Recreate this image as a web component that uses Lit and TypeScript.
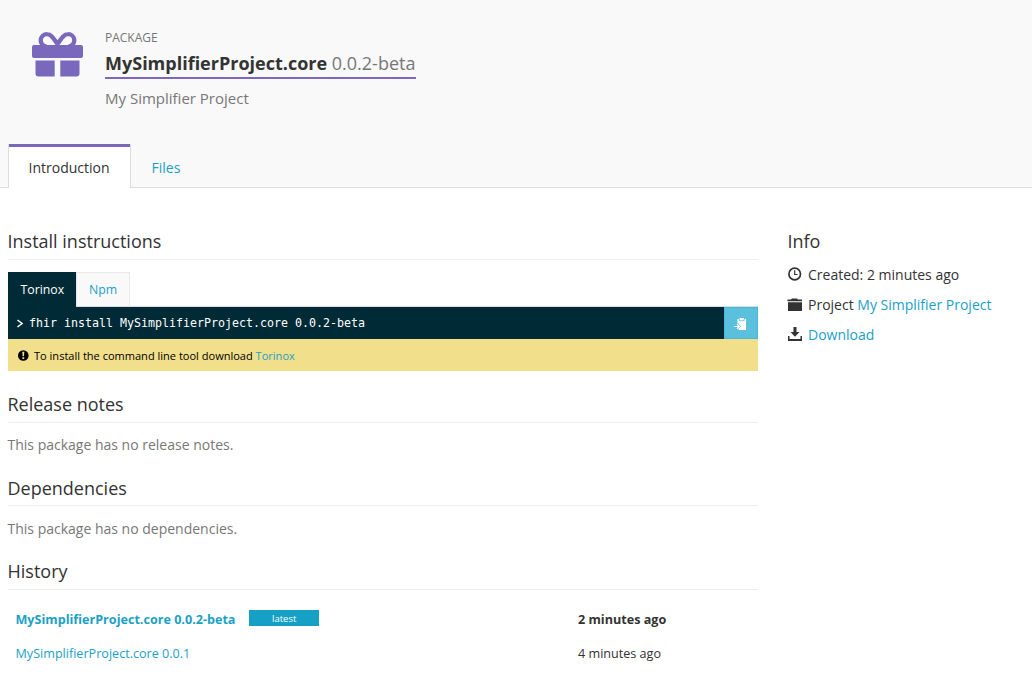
import { LitElement, html, css, svg } from "lit";
import { customElement } from "lit/decorators.js";

const gift = svg`<path d="M14.500 14.500A6.100 6.100 0 0 1 15.200 2.200C19.800 2.200 22 7.500 25.500 12C29 7.500 31.200 2.200 35.800 2.200A6.100 6.100 0 0 1 36.500 14.500" fill="none" stroke="#7a68bd" stroke-width="4.300"/><rect x="0" y="13" width="51" height="13" rx="2"/><path d="M3.500 28.500H22.700V44.500H6.500Q3.500 44.500 3.500 41.500ZM28.300 28.500H47.500V41.500Q47.500 44.500 44.500 44.500H28.300Z"/>`;

@customElement("app-root")
export class AppRoot extends LitElement {
  static styles = css`
    :host { display: block; width: 1032px; height: 688px; overflow: hidden; background: #fff; color: #333; font: 14px/20px "Open Sans", "Noto Sans", sans-serif; }
    * { box-sizing: border-box; }
    a { color: #1ba1c7; text-decoration: none; }
    svg { display: block; fill: currentColor; flex: none; }
    .header { height: 188px; background: #f9f9f9; border-bottom: 1px solid #ddd; display: flex; flex-direction: column; justify-content: space-between; }
    .title { display: flex; padding: 28px 0 0 32px; }
    .gift { color: #7a68bd; margin: 4px 22px 0 0; overflow: visible; }
    .kind { font-size: 12px; line-height: 20px; color: #777; }
    .name { width: 311px; height: 31px; border-bottom: 2px solid #7a68bd; font-size: 18px; line-height: 31px; color: #777; white-space: nowrap; }
    .name b { color: #333; }
    .desc { font-size: 15px; line-height: 20px; margin-top: 9px; color: #777; }
    .tabs { display: flex; height: 44px; margin: 0 0 -1px 8px; }
    .tab { height: 44px; padding: 14px 20px 0 20.500px; }
    .tab.on { width: 123px; padding: 14px 0 0 19.500px; border: 1px solid #ddd; border-top: 0; border-bottom: 0; background: #fff; box-shadow: inset 0 3px #7a68bd; }
    .body { display: flex; gap: 30px; padding: 0 8px; }
    .main { width: 750px; }
    h2 { margin: 0; font-size: 18px; font-weight: 400; line-height: 24px; text-indent: -0.500px; }
    .main h2 { height: 31px; border-bottom: 1px solid #eee; }
    .first { margin-top: 41px; }
    .subtabs { display: flex; height: 35px; margin-top: 12px; font-size: 12.300px; border-bottom: 1px solid #ddd; }
    .sub { height: 34px; border: 1px solid #e8e8e8; border-bottom: 0; width: 54px; background: #f9f9f9; padding-left: 12px; line-height: 33px; }
    .sub.on { height: 35px; width: 68px; border: 0; background: #002b36; color: #fff; line-height: 35px; padding-left: 12.500px; }
    .code { height: 32px; display: flex; align-items: center; background: #002b36; color: #fff; font: 11.630px/32px "DejaVu Sans Mono", monospace; white-space: pre; }
    .prompt { margin: 0 6px 0 9px; }
    .copy { margin-left: auto; width: 34px; height: 32px; padding: 1px 2px 0 0; background: #5bc0de; border: 1px solid #46b8da; display: grid; place-items: center; }
    .note { height: 32px; display: flex; align-items: center; gap: 5px; padding: 1px 0 0 10px; background: #f1df8b; color: #000; font-size: 11.040px; }
    .rel { margin-top: 21px; }
    .dep { margin-top: 20px; }
    .main .dep { height: 30px; }
    .dep + p { height: 34px; padding-top: 13px; }
    .hist { margin-top: 19px; }
    p { margin: 0; padding-top: 12px; height: 33px; color: #777; text-indent: -0.500px; }
    .row { display: flex; align-items: center; height: 34px; padding-left: 8px; font-size: 12.600px; }
    .row a { text-indent: -0.500px; }
    .rows { padding-top: 13px; }
    .pkg { width: 562px; display: flex; align-items: center; }
    .new { font-weight: 700; }
    .badge { width: 70px; height: 16px; margin: -5px 0 0 13.700px; background: #17a0c6; color: #fff; font-size: 9.500px; font-weight: 400; line-height: 17px; text-align: center; }
    .info { width: 230px; padding-top: 41px; }
    .info h2 { margin-bottom: 7px; }
    .item { display: flex; align-items: center; height: 30px; gap: 6px; white-space: pre; }
    .item svg { margin-top: -2px; }
  `;

  render() {
    return html`
      <div class="header">
        <div class="title">
          <svg class="gift" width="51" height="45" viewBox="0 0 51 45">${gift}</svg>
          <div>
            <div class="kind">PACKAGE</div>
            <div class="name"><b>MySimplifierProject.core</b> 0.0.2-beta</div>
            <div class="desc">My Simplifier Project</div>
          </div>
        </div>
        <div class="tabs"><div class="tab on">Introduction</div><a class="tab">Files</a></div>
      </div>
      <div class="body">
        <div class="main">
          <h2 class="first">Install instructions</h2>
          <div class="subtabs"><div class="sub on">Torinox</div><a class="sub">Npm</a></div>
          <div class="code">
            <svg class="prompt" width="6" height="9" viewBox="0 0 6 9"><path d="M.5 1 5 4.500.5 8" fill="none" stroke="#fff" stroke-width="1.500"/></svg><span>fhir install MySimplifierProject.core 0.0.2-beta</span>
            <div class="copy"><svg width="12" height="12" viewBox="0 0 12 12"><path d="M3.500 1H5.500V0H10V1H12V12H4.500V10.500L7 8.500 4.500 5.500H3.500Z"/><path d="M5.300 1V2.700H10.200V1" stroke="#5bc0de" stroke-width=".8" fill="none"/><path d="M0 8.500H5M3 6.300 5.300 8.500 3 10.700" fill="none" stroke="#fff" stroke-width="1.200"/></svg></div>
          </div>
          <div class="note">
            <svg width="11" height="11" viewBox="0 0 11 11"><circle cx="5.300" cy="5.500" r="5.300"/><path d="M4.300 1.800H6.300L6 6.300H4.600ZM4.400 7.300H6.200V9H4.400Z" fill="#f1df8b"/></svg>
            <span>To install the command line tool download <a>Torinox</a></span>
          </div>
          <h2 class="rel">Release notes</h2>
          <p>This package has no release notes.</p>
          <h2 class="dep">Dependencies</h2>
          <p>This package has no dependencies.</p>
          <h2 class="hist">History</h2>
          <div class="rows">
            <div class="row new"><div class="pkg"><a>MySimplifierProject.core 0.0.2-beta</a><span class="badge">latest</span></div><span>2 minutes ago</span></div>
            <div class="row"><div class="pkg"><a>MySimplifierProject.core 0.0.1</a></div><span>4 minutes ago</span></div>
          </div>
        </div>
        <div class="info">
          <h2>Info</h2>
          <div class="item"><svg width="14" height="14" viewBox="0 0 14 14"><circle cx="6.700" cy="7" r="5.800" fill="none" stroke="#333" stroke-width="1.700"/><path d="M6.700 3.300V7.500H9.500" fill="none" stroke="#333" stroke-width="1.200"/></svg><span>Created: 2 minutes ago</span></div>
          <div class="item"><svg width="14" height="13" viewBox="0 0 14 13" overflow="visible"><path d="M-.5 3.300V1.500H3L4 .5H9L10 1.500H14V3.300ZM0 4.300H14V13H0Z"/></svg><span>Project <a>My Simplifier Project</a></span></div>
          <div class="item"><svg width="14" height="14" viewBox="0 0 14 14"><path d="M5.500 0H8.500V5H11.500L7 9.800 2.500 5H5.500ZM0 9H1.500V12H12.500V9H14V14H0Z"/></svg><a>Download</a></div>
        </div>
      </div>`;
  }
}
